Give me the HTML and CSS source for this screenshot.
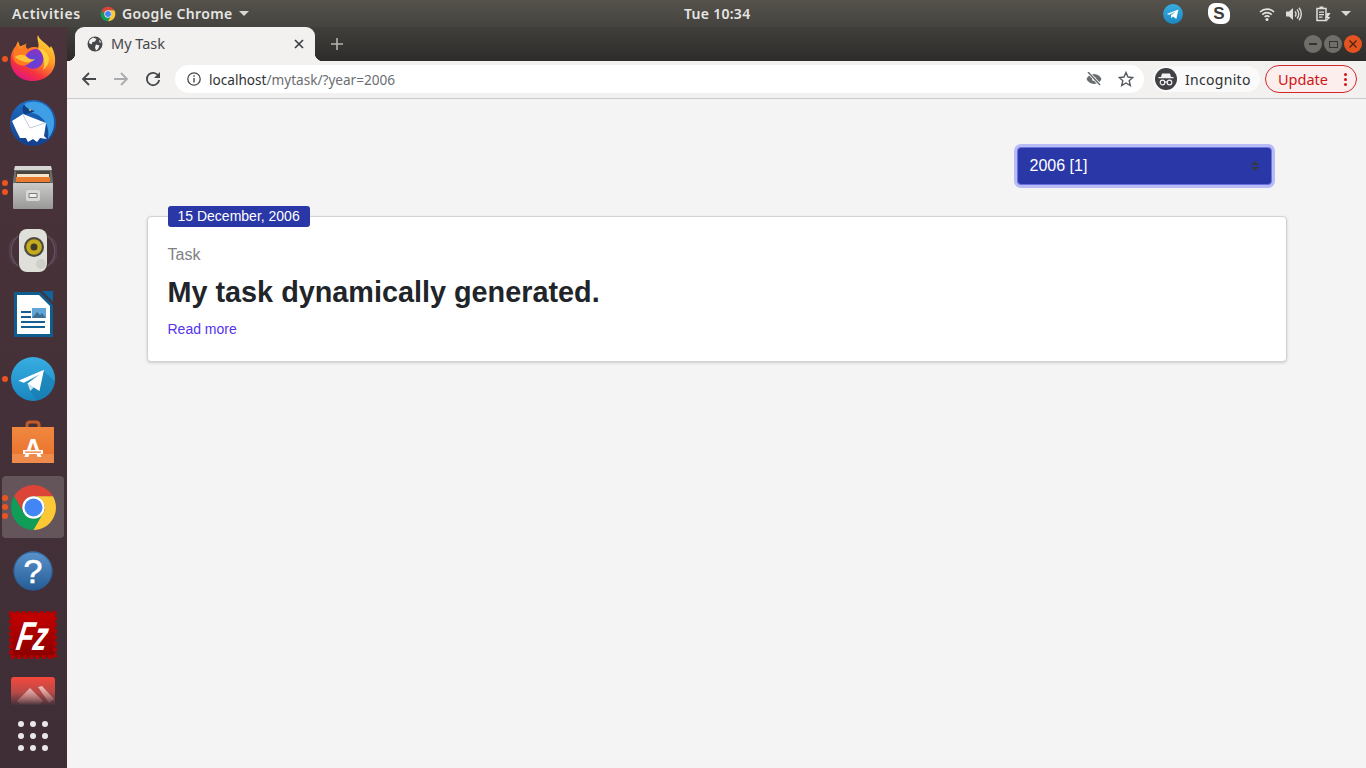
FILE: index.html
```html
<!DOCTYPE html>
<html lang="en">
<head>
<meta charset="utf-8">
<title>My Task</title>
<link rel="stylesheet" href="styles.css">
</head>
<body>
<svg class="defs" width="0" height="0" aria-hidden="true">
  <defs>
    <symbol id="chrome" viewBox="0 0 48 48">
      <path fill="#db4437" d="M4.95 13A22 22 0 0 1 43.05 13H24A11 11 0 0 0 14.47 29.5Z"/>
      <path fill="#0f9d58" d="M4.95 13A22 22 0 0 0 24 46L33.53 29.5A11 11 0 0 1 14.47 29.5Z"/>
      <path fill="#fcc934" d="M43.05 13A22 22 0 0 1 24 46L33.53 29.5A11 11 0 0 0 24 13Z"/>
      <circle cx="24" cy="24" r="11" fill="#fff"/>
      <circle cx="24" cy="24" r="8.8" fill="#4285f4"/>
    </symbol>
    <linearGradient id="tg" x1="0" y1="0" x2="0" y2="1"><stop offset="0" stop-color="#37aee2"/><stop offset="1" stop-color="#1b86c0"/></linearGradient>
    <linearGradient id="ffBody" x1="0.85" y1="0" x2="0.3" y2="1"><stop offset="0" stop-color="#ffe03d"/><stop offset="0.45" stop-color="#ff9a26"/><stop offset="0.78" stop-color="#f5313f"/><stop offset="1" stop-color="#e31587"/></linearGradient>
    <radialGradient id="ffCore" cx="0.55" cy="0.6" r="0.6"><stop offset="0" stop-color="#5546d8"/><stop offset="1" stop-color="#9130c4"/></radialGradient>
    <linearGradient id="tbBlue" x1="0" y1="0" x2="0" y2="1"><stop offset="0" stop-color="#1d6fc4"/><stop offset="1" stop-color="#143f8c"/></linearGradient>
    <linearGradient id="cab" x1="0" y1="0" x2="0" y2="1"><stop offset="0" stop-color="#cbcbc9"/><stop offset="1" stop-color="#989896"/></linearGradient>
    <linearGradient id="bag" x1="0" y1="0" x2="0" y2="1"><stop offset="0" stop-color="#f0883f"/><stop offset="1" stop-color="#ea6f2a"/></linearGradient>
    <linearGradient id="help" x1="0" y1="0" x2="0" y2="1"><stop offset="0" stop-color="#5a93cc"/><stop offset="1" stop-color="#255c96"/></linearGradient>
    <linearGradient id="fz" x1="0" y1="0" x2="0" y2="1"><stop offset="0" stop-color="#c60000"/><stop offset="1" stop-color="#8a0000"/></linearGradient>
    <linearGradient id="redapp" x1="0" y1="0" x2="0" y2="1"><stop offset="0" stop-color="#f5483c"/><stop offset="0.55" stop-color="#b84a48"/><stop offset="1" stop-color="#44313a"/></linearGradient>
    <linearGradient id="rshape" x1="0" y1="0" x2="0" y2="1"><stop offset="0" stop-color="#e8c4c0"/><stop offset="1" stop-color="#e8c4c0" stop-opacity="0"/></linearGradient>
  </defs>
</svg>

<header class="topbar">
  <div class="tb-left">
    <span class="tb-activities">Activities</span>
    <svg class="tb-chrome" width="16" height="16"><use href="#chrome"/></svg>
    <span class="tb-app">Google Chrome</span>
    <span class="caret"></span>
  </div>
  <div class="tb-clock">Tue 10:34</div>
  <div class="tray">
    <svg class="tray-tg" width="20" height="20" viewBox="0 0 48 48"><circle cx="24" cy="24" r="24" fill="url(#tg)"/><path fill="#fff" d="M9 24 37 13 32 36 24 30 20 34 19 27 31 18 15 26Z"/></svg>
    <span class="tray-skype">S</span>
    <svg class="tray-wifi" width="16" height="14" viewBox="0 0 16 14"><g fill="none" stroke="#e4e4e2" stroke-width="1.6"><path d="M1 5A10 10 0 0 1 15 5"/><path d="M3.3 7.6A6.6 6.6 0 0 1 12.7 7.6"/><path d="M5.6 10A3.2 3.2 0 0 1 10.4 10"/></g><circle cx="8" cy="12.4" r="1.5" fill="#e4e4e2"/></svg>
    <svg class="tray-vol" width="16" height="14" viewBox="0 0 16 14"><path fill="#dcdcda" d="M0 4.500H3L7 1V13L3 9.500H0Z"/><g fill="none" stroke="#dcdcda" stroke-width="1.400"><path d="M9 4.500A3.500 3.500 0 0 1 9 9.500"/><path d="M11 2.500A6.500 6.500 0 0 1 11 11.500"/><path d="M13 .8A9.500 9.500 0 0 1 13 13.200"/></g></svg>
    <svg class="tray-bat" width="15" height="16" viewBox="0 0 15 16"><path fill="none" stroke="#e0e0de" stroke-width="1.500" d="M1 2.500H10V14.500H1Z"/><path fill="#e0e0de" d="M3.500 .5H7.500V2.500H3.500ZM3 5.500H8V6.800H3ZM3 8H8V9.300H3ZM3 10.500H6.500V11.800H3ZM11 7 14.500 7 12 11H14.500L10 16 11.500 12H9.500Z"/></svg>
    <span class="caret caret-tray"></span>
  </div>
</header>

<div class="desktop">
  <nav class="dock">
    <div class="dock-item">
      <span class="dots"><i></i></span>
      <svg width="46" height="48" viewBox="0 0 46 48">
        <path fill="url(#ffBody)" d="M28 0C29 5 36 8 40 13L41 11C45 17 46 25 44.500 31 42 40 33 46 22.500 46 10 46 .5 37 .5 25 .5 19 3 14 6 11L8 6 10 11.500 16 9C14 12 15 14 17 15 21 12 25 12 28 13 30 8 26 4 28 0Z"/>
        <circle cx="23" cy="23.500" r="10.500" fill="url(#ffCore)"/>
        <path fill="#ff7a22" d="M3.500 24C3 18 5 12 7 9L10 14 17 8C15 11 16 13 18 14 21 12 26 11 30 14 24 13 18 16 16 20 15 23 17 26 21 27 15 33 6 31 3.500 24Z"/>
        <path fill="#ffc23a" d="M5 22C9 19 14 19 17 22 19 24 22 25 25 24 22 28 16 28 12 26 9 25 7 24 5 22Z"/>
        <path fill="#ffd23c" d="M28 13C33 14 38 18 39 23 39 28 37 32 33 35 36 28 34 19 28 13Z"/>
      </svg>
    </div>
    <div class="dock-item">
      <svg width="48" height="48" viewBox="0 0 48 48">
        <circle cx="24" cy="24" r="23" fill="url(#tbBlue)"/>
        <path fill="#3f9fe6" d="M14 6C22 0 37 2 43 14 47 23 45 33 39 40 41 28 36 19 27 15 21 13 16 12 14 6Z"/>
        <path fill="#0f3f86" d="M15 5C17 9 21 11 26 12 22 14 18 15 15 15 13 12 13 8 15 5Z"/>
        <circle cx="21" cy="11" r="1" fill="#f2c14e"/>
        <path fill="#fff" d="M3 22 14 15 37 24 35 37 38 40 31 39 28 43 24 40 19 43 17 39 11 39 7 31Z"/>
        <path fill="none" stroke="#c3ccd8" stroke-width="1" d="M14 16 21 29 36 24"/>
      </svg>
    </div>
    <div class="dock-item">
      <span class="dots"><i></i><i></i></span>
      <svg width="42" height="44" viewBox="0 0 42 44">
        <path fill="#6e6e6c" d="M3 2H39L41 16V42H1V16Z"/>
        <path fill="#d5d5d3" d="M3 1H39L40 5H2Z"/>
        <rect x="4" y="6" width="34" height="12" fill="#4b4540"/>
        <rect x="5" y="9" width="32" height="3" fill="#f6e4c8"/>
        <rect x="4" y="12" width="34" height="5" fill="#e87b2e"/>
        <rect x="1" y="18" width="40" height="26" rx="1" fill="url(#cab)"/>
        <rect x="14" y="25" width="14" height="11" rx="2" fill="#d9d9d7"/>
        <rect x="16.500" y="28" width="9" height="5" rx="1" fill="#7c7c7a"/>
        <rect x="17.500" y="29" width="7" height="3" fill="#efefed"/>
      </svg>
    </div>
    <div class="dock-item">
      <svg width="48" height="46" viewBox="0 0 48 46">
        <g fill="none" stroke="#6c5e72" stroke-width="1.500" opacity=".7"><path d="M9 8A20 20 0 0 0 9 38"/><path d="M39 8A20 20 0 0 1 39 38"/><path d="M5 10A20 20 0 0 0 5 36" opacity=".5"/><path d="M43 10A20 20 0 0 1 43 36" opacity=".5"/></g>
        <rect x="10" y="1" width="28" height="43" rx="8" fill="#e0e0da"/>
        <circle cx="25" cy="19" r="10" fill="#4a4a40"/>
        <circle cx="25" cy="19" r="7.800" fill="#c6aa1e"/>
        <circle cx="25" cy="19" r="3.500" fill="#3f3c2a"/>
        <circle cx="32" cy="36" r="5" fill="#cfcfc9"/>
      </svg>
    </div>
    <div class="dock-item">
      <svg width="42" height="48" viewBox="0 0 42 48">
        <path fill="#0f5c8f" d="M2 1H28L41 14V46H2Z"/>
        <path fill="#11639b" d="M30 0 41 0 41 11Z"/>
        <path fill="#fff" d="M5 4H27L38 15V43H5Z"/>
        <g fill="#165f93"><rect x="9" y="20" width="10" height="2"/><rect x="9" y="25" width="10" height="2"/><rect x="9" y="30" width="24" height="2"/><rect x="9" y="35" width="24" height="2"/></g>
        <rect x="20" y="17" width="14" height="10" fill="#5fa6d6"/>
        <path fill="#3d6f94" d="M20 27 25 21 28 24 30 22 34 27Z"/>
      </svg>
    </div>
    <div class="dock-item">
      <span class="dots"><i></i></span>
      <svg width="44" height="44" viewBox="0 0 48 48">
        <circle cx="24" cy="24" r="24" fill="url(#tg)"/>
        <path fill="#1478ac" opacity=".5" d="M20 36 34 14 48 27A24 24 0 0 1 28 47Z"/>
        <path fill="#c9e2f0" d="M18 29 21 37 25 33Z"/>
        <path fill="#fff" d="M8 26 36 14 31 37 18 29 31 19 14 28Z"/>
      </svg>
    </div>
    <div class="dock-item">
      <svg width="44" height="46" viewBox="0 0 44 46">
        <path fill="none" stroke="#c25a28" stroke-width="3" d="M16 12V5Q16 2 19 2H25Q28 2 28 5V12"/>
        <path fill="#df6f30" d="M3 7H41L43 13H1Z"/>
        <rect x="1" y="7" width="42" height="36" fill="url(#bag)"/>
        <rect x="1" y="34" width="42" height="9" fill="#f08a4a"/>
        <text class="bag-a" x="22" y="37">A</text>
        <rect x="12" y="30" width="20" height="4" fill="#fff"/>
        <rect x="14" y="31.500" width="16" height="1.200" fill="#ea6f2a"/>
      </svg>
    </div>
    <div class="dock-item dock-active">
      <span class="dots"><i></i><i></i><i></i></span>
      <svg width="49" height="49"><use href="#chrome"/></svg>
    </div>
    <div class="dock-item">
      <svg width="40" height="40" viewBox="0 0 40 40">
        <circle cx="20" cy="20" r="19.500" fill="url(#help)"/>
        <circle cx="20" cy="20" r="19" fill="none" stroke="#2a5f95"/>
        <text class="help-q" x="20" y="32">?</text>
      </svg>
    </div>
    <div class="dock-item">
      <svg width="48" height="48" viewBox="0 0 48 48">
        <rect x="2" y="2" width="44" height="44" fill="url(#fz)"/>
        <g fill="none" stroke="#b30000" stroke-width="4.500" stroke-dasharray="0 6.200" stroke-linecap="round"><rect x="2" y="2" width="44" height="44"/></g>
        <text class="fz-text" transform="translate(6 38.500) skewX(-10) scale(.92 1.350)">Fz</text>
      </svg>
    </div>
    <div class="dock-item dock-clip">
      <svg width="44" height="28" viewBox="0 0 44 28">
        <path fill="url(#redapp)" d="M3 0H41Q44 0 44 3V28H0V3Q0 0 3 0Z"/>
        <path fill="url(#rshape)" d="M6 24 19 11 32 24 28 28H10ZM27 10 31 9 43 22 38 26Z"/>
      </svg>
    </div>
    <div class="dock-grid">
      <i></i><i></i><i></i><i></i><i></i><i></i><i></i><i></i><i></i>
    </div>
  </nav>

  <div class="window">
    <div class="titlebar">
      <div class="tab">
        <svg class="tab-globe" width="16" height="16" viewBox="0 0 16 16"><circle cx="8" cy="8" r="7.500" fill="#45474a"/><path fill="#f2f1f0" d="M6 1.500 9.500 3 8 5.500 5.500 6 4.500 8.500 2 7 2.500 4ZM9 8.500 12.500 9.500 11 13 9 14.500 8 11.500ZM12 3.500 14.500 6.500 12.500 6.500Z"/></svg>
        <span class="tab-title">My Task</span>
        <svg class="tab-x" width="10" height="10" viewBox="0 0 10 10"><path stroke="#3c4043" stroke-width="1.700" d="M1 1 9 9M9 1 1 9"/></svg>
      </div>
      <svg class="newtab" width="12" height="12" viewBox="0 0 12 12"><path stroke="#b4b4b2" stroke-width="1.600" d="M6 0V12M0 6H12"/></svg>
      <div class="winctl">
        <span class="ctl"><i class="ctl-min"></i></span>
        <span class="ctl"><i class="ctl-max"></i></span>
        <span class="ctl ctl-close">
          <svg width="8" height="8" viewBox="0 0 8 8"><path stroke="#4a2412" stroke-width="1.300" d="M.5.5 7.500 7.500M7.500.5.5 7.500"/></svg>
        </span>
      </div>
    </div>

    <div class="toolbar">
      <svg class="tool" width="16" height="16" viewBox="0 0 16 16"><path fill="none" stroke="#45484c" stroke-width="1.800" d="M15 8H2M8 2 2 8 8 14"/></svg>
      <svg class="tool tool-fwd" width="16" height="16" viewBox="0 0 16 16"><path fill="none" stroke="#a9abad" stroke-width="1.800" d="M1 8H14M8 2 14 8 8 14"/></svg>
      <svg class="tool tool-re" width="16" height="16" viewBox="0 0 16 16"><path fill="none" stroke="#45484c" stroke-width="1.800" d="M13.500 5A6.200 6.200 0 1 0 14.200 9"/><path fill="#45484c" d="M15 1V7H9Z"/></svg>
      <div class="omnibox">
        <svg class="info" width="14" height="14" viewBox="0 0 14 14"><circle cx="7" cy="7" r="6.200" fill="none" stroke="#45484c" stroke-width="1.300"/><path fill="#45484c" d="M6.300 6H7.700V10.500H6.300ZM6.300 3.300H7.700V4.800H6.300Z"/></svg>
        <span class="url"><span class="url-host">localhost</span>/mytask/?year=2006</span>
        <svg class="eye" width="16" height="14" viewBox="0 0 16 14"><path fill="#6a6d70" d="M8 2C4.500 2 1.700 4.200 .5 7 1.700 9.800 4.500 12 8 12 11.500 12 14.300 9.800 15.500 7 14.300 4.200 11.500 2 8 2Z"/><circle cx="8" cy="7" r="2" fill="#f8f8f8"/><path stroke="#fff" stroke-width="3" d="M2 0 14 13"/><path stroke="#6a6d70" stroke-width="1.500" d="M2 0 14 13"/></svg>
        <svg class="star" width="16" height="16" viewBox="0 0 16 16"><path fill="none" stroke="#55585c" stroke-width="1.400" d="M8 1.500 10 6 14.800 6.500 11.200 9.700 12.300 14.500 8 12 3.700 14.500 4.800 9.700 1.200 6.500 6 6Z"/></svg>
      </div>
      <div class="incog">
        <svg width="22" height="22" viewBox="0 0 22 22"><circle cx="11" cy="11" r="11" fill="#3f4145"/><path fill="#f2f2f2" d="M7 5.500H15L16 9H18.500V10.200H3.500V9H6Z"/><g fill="none" stroke="#f2f2f2" stroke-width="1.200"><circle cx="7.500" cy="14.500" r="2.300"/><circle cx="14.500" cy="14.500" r="2.300"/><path d="M9.800 14H12.200"/></g></svg>
        <span>Incognito</span>
      </div>
      <div class="update">
        <span>Update</span>
        <span class="kebab"><i></i><i></i><i></i></span>
      </div>
    </div>

    <main class="page">
      <div class="filter">
        <div class="select-wrap">
          <select class="year"><option>2006 [1]</option></select>
          <svg class="sel-arrows" width="8" height="10" viewBox="0 0 8 10"><path fill="#343a40" d="M4 0 8 4H0ZM4 10 0 6H8Z"/></svg>
        </div>
      </div>
      <article class="card">
        <span class="badge">15 December, 2006</span>
        <div class="kicker">Task</div>
        <h1 class="title">My task dynamically generated.</h1>
        <a class="more" href="#">Read more</a>
      </article>
    </main>
  </div>
</div>
</body>
</html>
```
FILE: styles.css
```css
* { box-sizing: border-box; }
html, body { margin: 0; height: 100%; }
body {
  width: 1366px;
  height: 768px;
  overflow: hidden;
  display: flex;
  flex-direction: column;
  font-family: "Liberation Sans", Arial, sans-serif;
  background: #f4f4f4;
}
.defs { position: absolute; }

/* GNOME top bar */
.topbar {
  height: 27px;
  flex: none;
  display: flex;
  align-items: center;
  background: linear-gradient(#55524c, #45433f);
  color: #e6e6e3;
  font-family: "Noto Sans", sans-serif;
  font-size: 14px;
  font-weight: 600;
}
.tb-left { width: 684px; flex: none; display: flex; align-items: center; padding-left: 12px; }
.tb-activities { width: 88px; letter-spacing: .63px; }
.tb-chrome { flex: none; margin-right: 6px; }
.tb-app { letter-spacing: .36px; }
.caret { width: 0; height: 0; margin-left: 6px; border: 5px solid transparent; border-top: 5px solid #d8d8d6; border-bottom: 0; }
.tb-clock { flex: none; width: 66px; white-space: nowrap; letter-spacing: .28px; }
.tray { margin-left: auto; display: flex; align-items: center; padding-right: 15px; }
.tray-tg { display: block; margin-right: 25px; }
.tray-skype {
  width: 22px; height: 21px; margin-right: 29px;
  border-radius: 7px 11px 7px 11px; background: #fff; color: #3b3a37;
  display: flex; align-items: center; justify-content: center;
  font: 700 17px "Liberation Sans", sans-serif;
}
.tray-wifi { margin-right: 11px; }
.tray-vol { margin-right: 14px; }
.tray-bat { margin-right: 10px; }
.caret-tray { margin-left: 0; }

/* Layout */
.desktop { flex: 1; display: flex; min-height: 0; }

/* Dock */
.dock {
  width: 67px;
  flex: none;
  display: flex;
  flex-direction: column;
  overflow: hidden;
  background: linear-gradient(#4a333a, #3f2e36);
}
.dock-item { height: 64px; flex: none; position: relative; display: flex; align-items: center; justify-content: center; padding-right: 1px; }
.dock-item svg { display: block; }
.dock-active::before {
  content: ""; position: absolute; left: 2px; right: 3px; top: 1px; bottom: 1px;
  border-radius: 4px; background: rgba(255, 255, 255, .18);
}
.dock-active svg { position: relative; }
.dots {
  position: absolute; left: 2px; top: 0; bottom: 0; z-index: 1;
  display: flex; flex-direction: column; justify-content: center; gap: 3px;
}
.dots i { width: 6px; height: 6px; border-radius: 50%; background: #e95420; }
.dock-clip { height: 28px; margin-top: 10px; align-items: flex-start; }
.dock-grid {
  width: 30px; margin: 16px 0 0 18px;
  display: grid; grid-template-columns: repeat(3, 6px); justify-content: space-between; row-gap: 6px;
}
.dock-grid i { width: 6px; height: 6px; border-radius: 50%; background: #e8e8e8; }
.bag-a { font: 700 25px "Liberation Sans", sans-serif; fill: #fff; text-anchor: middle; }
.help-q { font: 400 34px "Liberation Sans", sans-serif; fill: #fff; stroke: #fff; stroke-width: .6px; text-anchor: middle; }
.fz-text { font: italic 700 30px "Liberation Sans", sans-serif; fill: #fff; }

/* Browser window */
.window { flex: 1; min-width: 0; display: flex; flex-direction: column; }
.titlebar {
  height: 34px; flex: none;
  display: flex; align-items: flex-end;
  padding-left: 8px;
  background: linear-gradient(#403f3b, #2d2c2a);
}
.tab {
  position: relative;
  width: 240px; height: 34px;
  display: flex; align-items: center;
  padding: 0 11px 0 12px;
  border-radius: 9px 9px 0 0;
  background: #f2f1f0;
  color: #45474a;
  font: 14.5px "Noto Sans", sans-serif;
}
.tab::before, .tab::after {
  content: ""; position: absolute; bottom: 0; width: 8px; height: 8px;
}
.tab::before { left: -8px; background: radial-gradient(circle at 0 0, transparent 8px, #f2f1f0 8.500px); }
.tab::after { right: -8px; background: radial-gradient(circle at 100% 0, transparent 8px, #f2f1f0 8.500px); }
.tab-globe { flex: none; margin-right: 8px; }
.tab-title { flex: 1; padding-bottom: 2px; }
.tab-x { flex: none; }
.newtab { flex: none; margin: 0 0 11px 16px; }
.winctl { margin-left: auto; margin-bottom: 8px; padding-right: 4px; display: flex; gap: 2px; }
.ctl { width: 18px; height: 18px; border-radius: 50%; background: #6f6e69; display: flex; align-items: center; justify-content: center; }
.ctl-min { width: 8px; height: 1.500px; background: #35342f; }
.ctl-max { width: 9px; height: 7px; border: 1px solid #35342f; }
.ctl-close { background: #e4531f; }

.toolbar {
  height: 38px; flex: none;
  display: flex; align-items: center;
  padding: 0 9px 1px 14px;
  background: #f2f1f0;
  border-bottom: 1px solid #c9c9c9;
}
.tool { flex: none; margin-right: 16px; }
.tool-re { margin-right: 14px; }
.omnibox {
  width: 969px; height: 28px; flex: none;
  display: flex; align-items: center;
  padding: 0 10px 0 12px;
  border-radius: 14px;
  background: #fff;
  font: 13.6px "Noto Sans", sans-serif;
  color: #6b6e72;
}
.info { flex: none; margin-right: 8px; }
.url { flex: 1; white-space: nowrap; }
.url-host { color: #2f3134; }
.eye { flex: none; margin-right: 16px; }
.star { flex: none; }
.incog {
  width: 107px; height: 26px; flex: none;
  margin-left: 9px;
  display: flex; align-items: center; gap: 8px;
  padding-left: 2px;
  border-radius: 13px;
  background: #fafafa;
  color: #2f3134;
  font: 14px "Noto Sans", sans-serif;
  letter-spacing: .3px;
}
.update {
  width: 92px; height: 28px; flex: none;
  margin-left: 5px;
  display: flex; align-items: center; justify-content: space-between;
  padding: 0 9px 0 12px;
  border: 1px solid #d3272b;
  border-radius: 14px;
  background: #fbeeec;
  color: #cc1518;
  font: 14.5px "Noto Sans", sans-serif;
}
.kebab { display: flex; flex-direction: column; gap: 2px; }
.kebab i { width: 3px; height: 3px; border-radius: 50%; background: #cc1518; }

/* Page */
.page { flex: 1; padding-top: 48px; }
.filter { width: 1140px; margin: 0 auto 31px; display: flex; justify-content: flex-end; padding-right: 15px; }
.select-wrap { position: relative; width: 255px; height: 38px; }
.year {
  display: block; width: 100%; height: 100%;
  appearance: none;
  padding: 0 12px 2px;
  border: 1px solid #6a74dc;
  border-radius: 4px;
  background: #2a37a7;
  box-shadow: 0 0 0 3px #b9bbf7;
  color: #fff;
  font: 16px "Liberation Sans", sans-serif;
  outline: none;
}
.sel-arrows { position: absolute; right: 13px; top: 14px; }
.card {
  position: relative;
  width: 1140px; height: 146px;
  margin: 0 auto;
  padding: 26px 20px 0;
  border: 1px solid #d2d2d2;
  border-radius: 4px;
  background: #fff;
  box-shadow: 0 1px 3px rgba(0, 0, 0, .16);
}
.badge {
  position: absolute; left: 20px; top: -11px;
  height: 21px; padding: 0 10px 1px;
  display: flex; align-items: center;
  border-radius: 3px;
  background: #2a37a7;
  color: #fff;
  font-size: 14px;
}
.kicker { color: #808184; font-size: 16px; line-height: 24px; }
.title { margin: 7px 0 9px; color: #212529; font-size: 28.8px; font-weight: 700; line-height: 36px; }
.more { color: #5533ee; font-size: 14px; line-height: 21px; text-decoration: none; }
```
